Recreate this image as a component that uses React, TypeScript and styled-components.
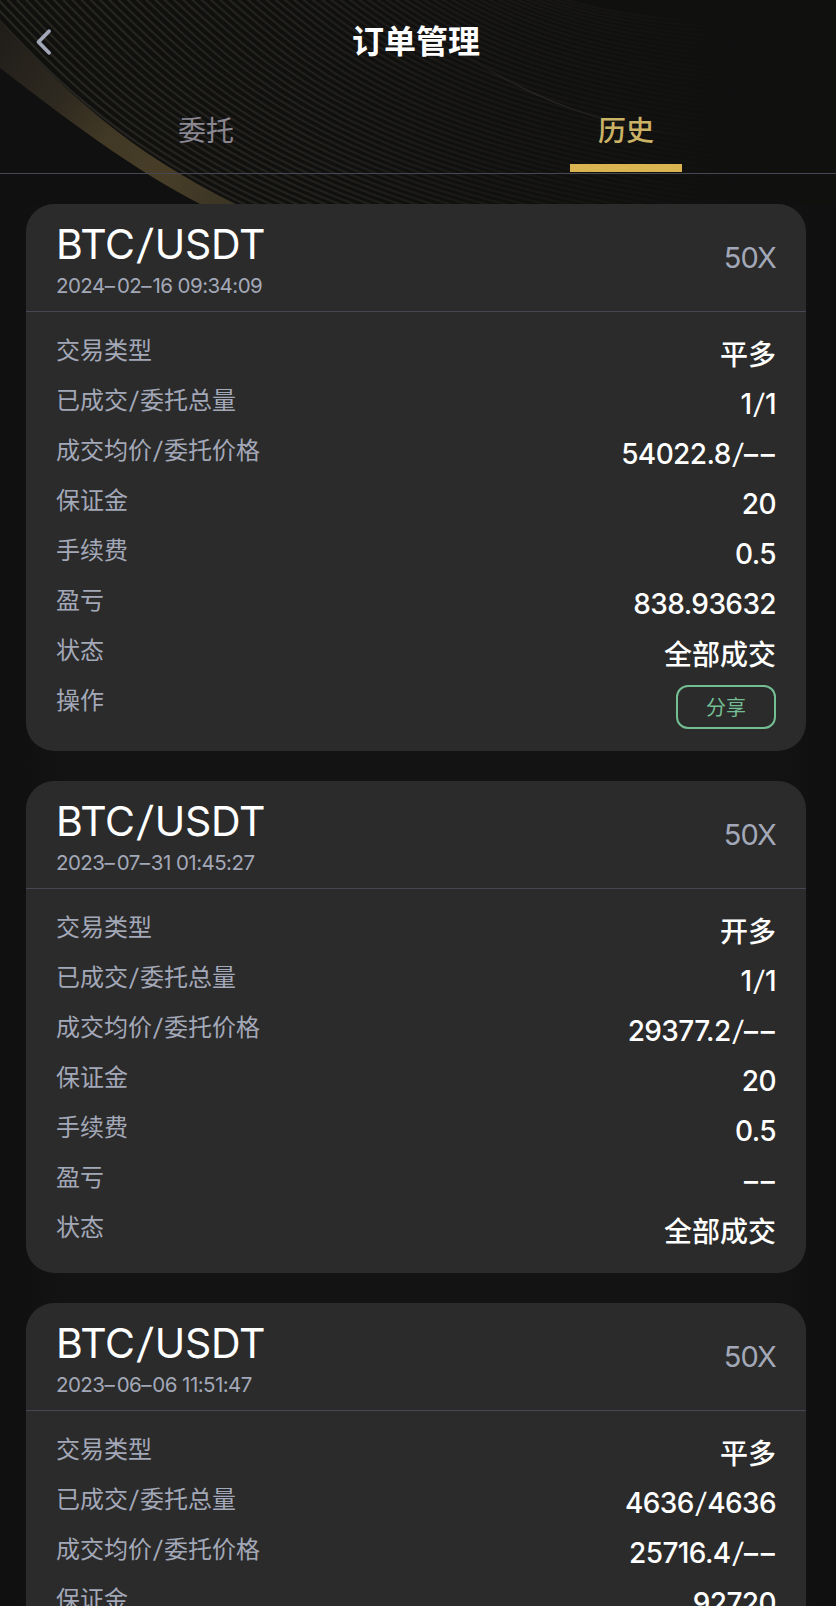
import React from 'react';
import styled, { createGlobalStyle } from 'styled-components';

const GlobalStyle = createGlobalStyle`
  *, *::before, *::after { box-sizing: border-box; }
  html, body { margin: 0; background: #111; }
  body { font-family: Inter, 'Noto Sans CJK SC', sans-serif; overflow: hidden; }
`;

const Page = styled.div`
  position: relative;
  width: 100%;
  height: 1606px;
  overflow: hidden;
  background: linear-gradient(90deg, #0f0f0f, #131313 8%, #131313 93%, #0f0f0f);
  color: #fff;
`;

const Backdrop = styled.svg`
  position: absolute;
  top: 0;
  left: 0;
  display: block;
`;

const Content = styled.div`
  position: relative;
`;

const Header = styled.header`
  display: grid;
  grid-template-columns: 88px 1fr 88px;
  align-items: center;
  height: 84px;
  padding-right: 4px;
`;

const BackButton = styled.button`
  display: flex;
  align-items: center;
  height: 84px;
  padding: 0 0 0 33px;
  border: 0;
  background: none;
  color: #a3a8b8;
`;

const Title = styled.h1`
  margin: 0;
  text-align: center;
  font-size: 32px;
  line-height: 44px;
  font-weight: 600;
`;

const Tabs = styled.nav`
  display: grid;
  grid-template-columns: 1fr 1fr;
  column-gap: 8px;
  height: 90px;
  padding-right: 4px;
  border-bottom: 1px solid #464752;
`;

const Tab = styled.div<{ $active?: boolean }>`
  display: flex;
  flex-direction: column;
  align-items: center;
  justify-content: space-between;
  padding: 27px 0 1px;
  font-size: 28px;
  line-height: 40px;
  font-weight: ${(p) => (p.$active ? 500 : 400)};
  color: ${(p) => (p.$active ? '#cbb365' : '#8a8791')};
  &::after {
    content: '';
    width: 112px;
    height: 8px;
    background: ${(p) => (p.$active ? '#d9b450' : 'transparent')};
  }
`;

const Orders = styled.main`
  display: flex;
  flex-direction: column;
  gap: 30px;
  padding: 30px 30px 0 26px;
`;

const Card = styled.article`
  border-radius: 28px;
  background: #2b2b2b;
`;

const CardHead = styled.div`
  display: flex;
  align-items: center;
  justify-content: space-between;
  height: 108px;
  padding: 0 30px;
  border-bottom: 1px solid #464752;
`;

const Pair = styled.div`
  padding-top: 4px;
  font-size: 41px;
  line-height: 48px;
  letter-spacing: -0.35px;
  white-space: nowrap;
`;

const Time = styled.div`
  font-size: 20.5px;
  line-height: 28px;
  margin-top: 4px;
  letter-spacing: -0.55px;
  white-space: nowrap;
  color: #a3a8b8;
`;

const Leverage = styled.div`
  font-size: 29px;
  letter-spacing: -0.8px;
  color: #a3a8b8;
`;

const CardBody = styled.div`
  padding: 21px 30px 13px;
`;

const Row = styled.div<{ $tall?: boolean }>`
  display: flex;
  align-items: flex-start;
  justify-content: space-between;
  height: ${(p) => (p.$tall ? 55 : 50)}px;
`;

const Label = styled.span`
  font-size: 24px;
  line-height: 36px;
  white-space: nowrap;
  color: #a3a8b8;
`;

const Value = styled.span<{ $words: boolean }>`
  padding-top: ${(p) => (p.$words ? 1 : 0)}px;
  font-size: 28px;
  line-height: 42px;
  font-weight: 500;
  letter-spacing: ${(p) => (p.$words ? 0 : -0.6)}px;
  white-space: nowrap;
`;

const Slash = styled.span`
  display: inline-block;
  padding: 0 0.07em;
  font-weight: 400;
  transform: skewX(-6deg);
`;

const Dash = styled.span`
  letter-spacing: 0.1em;
  &:last-child { margin-right: -0.06em; }
`;

const ShareButton = styled.button`
  width: 100px;
  height: 44px;
  margin-top: 2px;
  padding: 0 0 2px;
  border: 2px solid #74be93;
  border-radius: 12px;
  background: none;
  color: #74be93;
  font-family: inherit;
  font-size: 20px;
`;

type Order = { time: string; values: string[]; share?: boolean };

const labels = ['交易类型', '已成交/委托总量', '成交均价/委托价格', '保证金', '手续费', '盈亏', '状态'];

const orders: Order[] = [
  { time: '2024–02–16 09:34:09', values: ['平多', '1/1', '54022.8/––', '20', '0.5', '838.93632', '全部成交'], share: true },
  { time: '2023–07–31 01:45:27', values: ['开多', '1/1', '29377.2/––', '20', '0.5', '––', '全部成交'] },
  { time: '2023–06–06 11:51:47', values: ['平多', '4636/4636', '25716.4/––', '92720'] },
];

/* Sets slashes and dashes wider than the letters around them. */
function Spaced({ text }: { text: string }) {
  return (
    <>
      {text.split(/(\/|–+)/).filter(Boolean).map((part, i) => {
        if (part === '/') return <Slash key={i}>/</Slash>;
        if (part[0] === '–') return <Dash key={i}>{part}</Dash>;
        return <React.Fragment key={i}>{part}</React.Fragment>;
      })}
    </>
  );
}

const LINE_COUNT = 64;
const firstLine = [-20, 0, 90, 115, 220, 275, 800, 340];
const lastLine = [560, -2, 610, 14, 680, 24, 800, 26];

const lines = Array.from({ length: LINE_COUNT }, (_, i) => {
  const t = i / (LINE_COUNT - 1);
  const p = firstLine.map((a, k) => (a + (lastLine[k] - a) * t).toFixed(1));
  return `M${p[0]} ${p[1]} C${p[2]} ${p[3]} ${p[4]} ${p[5]} ${p[6]} ${p[7]}`;
});

function Waves() {
  return (
    <Backdrop width="836" height="1606" viewBox="0 0 836 1606" fill="none">
      <defs>
        <linearGradient id="ribbon" x1="0" y1="40" x2="230" y2="205" gradientUnits="userSpaceOnUse">
          <stop offset="0" stopColor="#211e1a" />
          <stop offset="0.3" stopColor="#2f2a20" />
          <stop offset="0.5" stopColor="#413825" />
          <stop offset="0.75" stopColor="#483e28" />
          <stop offset="1" stopColor="#3b3424" />
        </linearGradient>
        <linearGradient id="line" x1="0" y1="0" x2="740" y2="0" gradientUnits="userSpaceOnUse">
          <stop offset="0" stopColor="#282621" />
          <stop offset="0.4" stopColor="#23211e" />
          <stop offset="0.65" stopColor="#191816" />
          <stop offset="1" stopColor="#101010" />
        </linearGradient>
        <linearGradient id="glint" x1="460" y1="0" x2="700" y2="0" gradientUnits="userSpaceOnUse">
          <stop offset="0" stopColor="#292724" stopOpacity="0" />
          <stop offset="0.3" stopColor="#292724" />
          <stop offset="1" stopColor="#292724" stopOpacity="0" />
        </linearGradient>
      </defs>
      <rect width="836" height="204" fill="#10100f" />
      {lines.map((d) => (
        <path key={d} d={d} stroke="url(#line)" strokeWidth="2.2" />
      ))}
      <path d="M460 52 Q530 98 600 118 T720 136" stroke="url(#glint)" strokeWidth="1.5" />
      <path d="M0 68 C65 118 130 168 204 206 H0 Z" fill="#101010" />
      <path d="M0 21 C65 92 130 153 240 206 L204 206 C130 168 65 118 0 68 Z" fill="url(#ribbon)" />
    </Backdrop>
  );
}

export default function App() {
  return (
    <Page>
      <GlobalStyle />
      <Waves />
      <Content>
        <Header>
          <BackButton aria-label="返回">
            <svg width="20" height="28" viewBox="0 0 20 28" fill="none">
              <path d="M16 3.2 L5.5 14 L16 24.8" stroke="currentColor" strokeWidth="3.8" strokeLinecap="round" strokeLinejoin="round" />
            </svg>
          </BackButton>
          <Title>订单管理</Title>
        </Header>
        <Tabs>
          <Tab>委托</Tab>
          <Tab $active>历史</Tab>
        </Tabs>
        <Orders>
          {orders.map((order) => (
            <Card key={order.time}>
              <CardHead>
                <div>
                  <Pair>
                    <Spaced text="BTC/USDT" />
                  </Pair>
                  <Time>
                    <Spaced text={order.time} />
                  </Time>
                </div>
                <Leverage>50X</Leverage>
              </CardHead>
              <CardBody>
                {order.values.map((value, i) => (
                  <Row key={labels[i]}>
                    <Label>
                      <Spaced text={labels[i]} />
                    </Label>
                    <Value $words={/[\u4e00-\u9fff]/.test(value)}>
                      <Spaced text={value} />
                    </Value>
                  </Row>
                ))}
                {order.share && (
                  <Row $tall>
                    <Label>操作</Label>
                    <ShareButton>分享</ShareButton>
                  </Row>
                )}
              </CardBody>
            </Card>
          ))}
        </Orders>
      </Content>
    </Page>
  );
}
